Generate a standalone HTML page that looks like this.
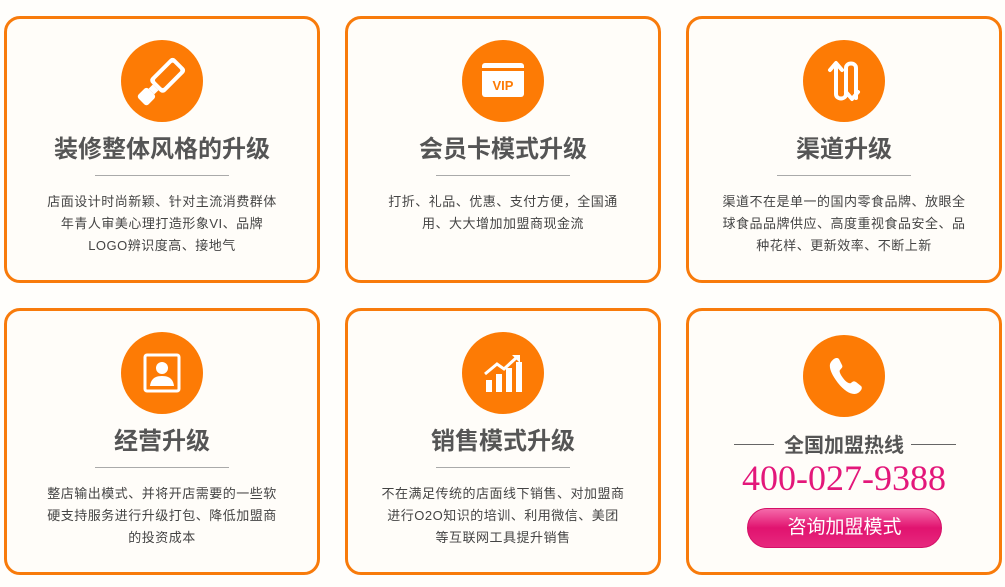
<!DOCTYPE html>
<html><head><meta charset="utf-8"><style>
*{margin:0;padding:0;box-sizing:border-box}
body{width:1005px;height:587px;background:#fffefb;font-family:"Liberation Sans","Noto Sans CJK SC",sans-serif;position:relative;overflow:hidden}
.c{position:absolute;width:316px;height:267px;border:3px solid #f87b0b;border-radius:16px;background:#fffdf9;text-align:center}
.ic{position:absolute;left:50%;top:21px;margin-left:-41px;width:82px;height:82px;border-radius:50%;background:#fd7b05}
.ic svg{width:82px;height:82px}
.t{position:absolute;left:0;right:0;top:114px;font-size:24px;font-weight:bold;color:#555;line-height:34px}
.ln{position:absolute;left:50%;margin-left:-67px;width:134px;top:156px;border-top:1px solid #aaa}
.d{position:absolute;left:0;right:0;top:172px;font-size:13px;letter-spacing:0.5px;line-height:22px;color:#444;white-space:nowrap}
</style></head><body>

<div class="c" style="left:4px;top:16px">
<div class="ic"><svg viewBox="0 0 82 82"><g transform="rotate(45 41 41)" fill="#fff"><rect x="31" y="16" width="20" height="34" rx="4"/><rect x="35" y="20" width="12" height="26" rx="2" fill="#fd7b05"/><rect x="37" y="50" width="8" height="6"/><rect x="34" y="56" width="14" height="14" rx="3"/></g></svg></div>
<div class="t">装修整体风格的升级</div><div class="ln"></div>
<div class="d">店面设计时尚新颖、针对主流消费群体<br>年青人审美心理打造形象VI、品牌<br>LOGO辨识度高、接地气</div>
</div>

<div class="c" style="left:345px;top:16px">
<div class="ic"><svg viewBox="0 0 82 82"><rect x="20" y="23" width="42" height="34" rx="3" fill="#fff"/><rect x="20" y="28" width="42" height="3" fill="#fd7b05"/><text x="41" y="50" font-size="13" font-family="Liberation Sans" fill="#fd7b05" text-anchor="middle" font-weight="bold">VIP</text></svg></div>
<div class="t">会员卡模式升级</div><div class="ln"></div>
<div class="d">打折、礼品、优惠、支付方便，全国通<br>用、大大增加加盟商现金流</div>
</div>

<div class="c" style="left:686px;top:16px">
<div class="ic"><svg viewBox="0 0 82 82" fill="none" stroke="#fff" stroke-width="4" stroke-linecap="round" stroke-linejoin="round"><path d="M27 30l6-7 6 7M33 24v30c0 6 10 6 10 0V28c0-6 10-6 10 0v30M43 52l6 7 6-7"/></svg></div>
<div class="t">渠道升级</div><div class="ln"></div>
<div class="d">渠道不在是单一的国内零食品牌、放眼全<br>球食品品牌供应、高度重视食品安全、品<br>种花样、更新效率、不断上新</div>
</div>

<div class="c" style="left:4px;top:308px">
<div class="ic"><svg viewBox="0 0 82 82"><rect x="24" y="23" width="34" height="36" rx="2" fill="none" stroke="#fff" stroke-width="3"/><circle cx="41" cy="36" r="6" fill="#fff"/><path d="M29 54c1-8 6-10 12-10s11 2 12 10z" fill="#fff"/></svg></div>
<div class="t">经营升级</div><div class="ln"></div>
<div class="d">整店输出模式、并将开店需要的一些软<br>硬支持服务进行升级打包、降低加盟商<br>的投资成本</div>
</div>

<div class="c" style="left:345px;top:308px">
<div class="ic"><svg viewBox="0 0 82 82" fill="#fff"><rect x="24" y="48" width="6" height="12"/><rect x="34" y="42" width="6" height="18"/><rect x="44" y="36" width="6" height="24"/><rect x="54" y="30" width="6" height="30"/><path d="M23 42l12-10 7 5 12-11" fill="none" stroke="#fff" stroke-width="3"/><path d="M50 23h8v8z"/></svg></div>
<div class="t">销售模式升级</div><div class="ln"></div>
<div class="d">不在满足传统的店面线下销售、对加盟商<br>进行O2O知识的培训、利用微信、美团<br>等互联网工具提升销售</div>
</div>

<div class="c" style="left:686px;top:308px">
<div class="ic" style="top:24px"><svg viewBox="0 0 82 82"><path d="M28 27c3-4 6-5 8-3l3 6c1 2 0 3-2 5-1 1 0 4 3 8s6 6 8 5c2-2 3-2 5-1l5 4c2 2 0 5-3 7-5 3-13-1-20-10s-10-17-7-21z" fill="#fff"/></svg></div>
<div style="position:absolute;left:45px;top:133px;width:40px;border-top:1px solid #666"></div>
<div style="position:absolute;left:222px;top:133px;width:45px;border-top:1px solid #666"></div>
<div style="position:absolute;left:0;right:0;top:118px;font-size:20px;font-weight:bold;color:#555">全国加盟热线</div>
<div style="position:absolute;left:0;right:0;top:147px;font-size:36px;color:#e3177a;font-family:'Liberation Serif',serif;line-height:40px">400-027-9388</div>
<div style="position:absolute;left:58px;top:197px;width:195px;height:40px;border-radius:20px;background:linear-gradient(#f56aaa,#e1136f 50%,#e7287e);border:1px solid #d51067;color:#fff;font-size:19px;line-height:38px">咨询加盟模式</div>
</div>

</body></html>
